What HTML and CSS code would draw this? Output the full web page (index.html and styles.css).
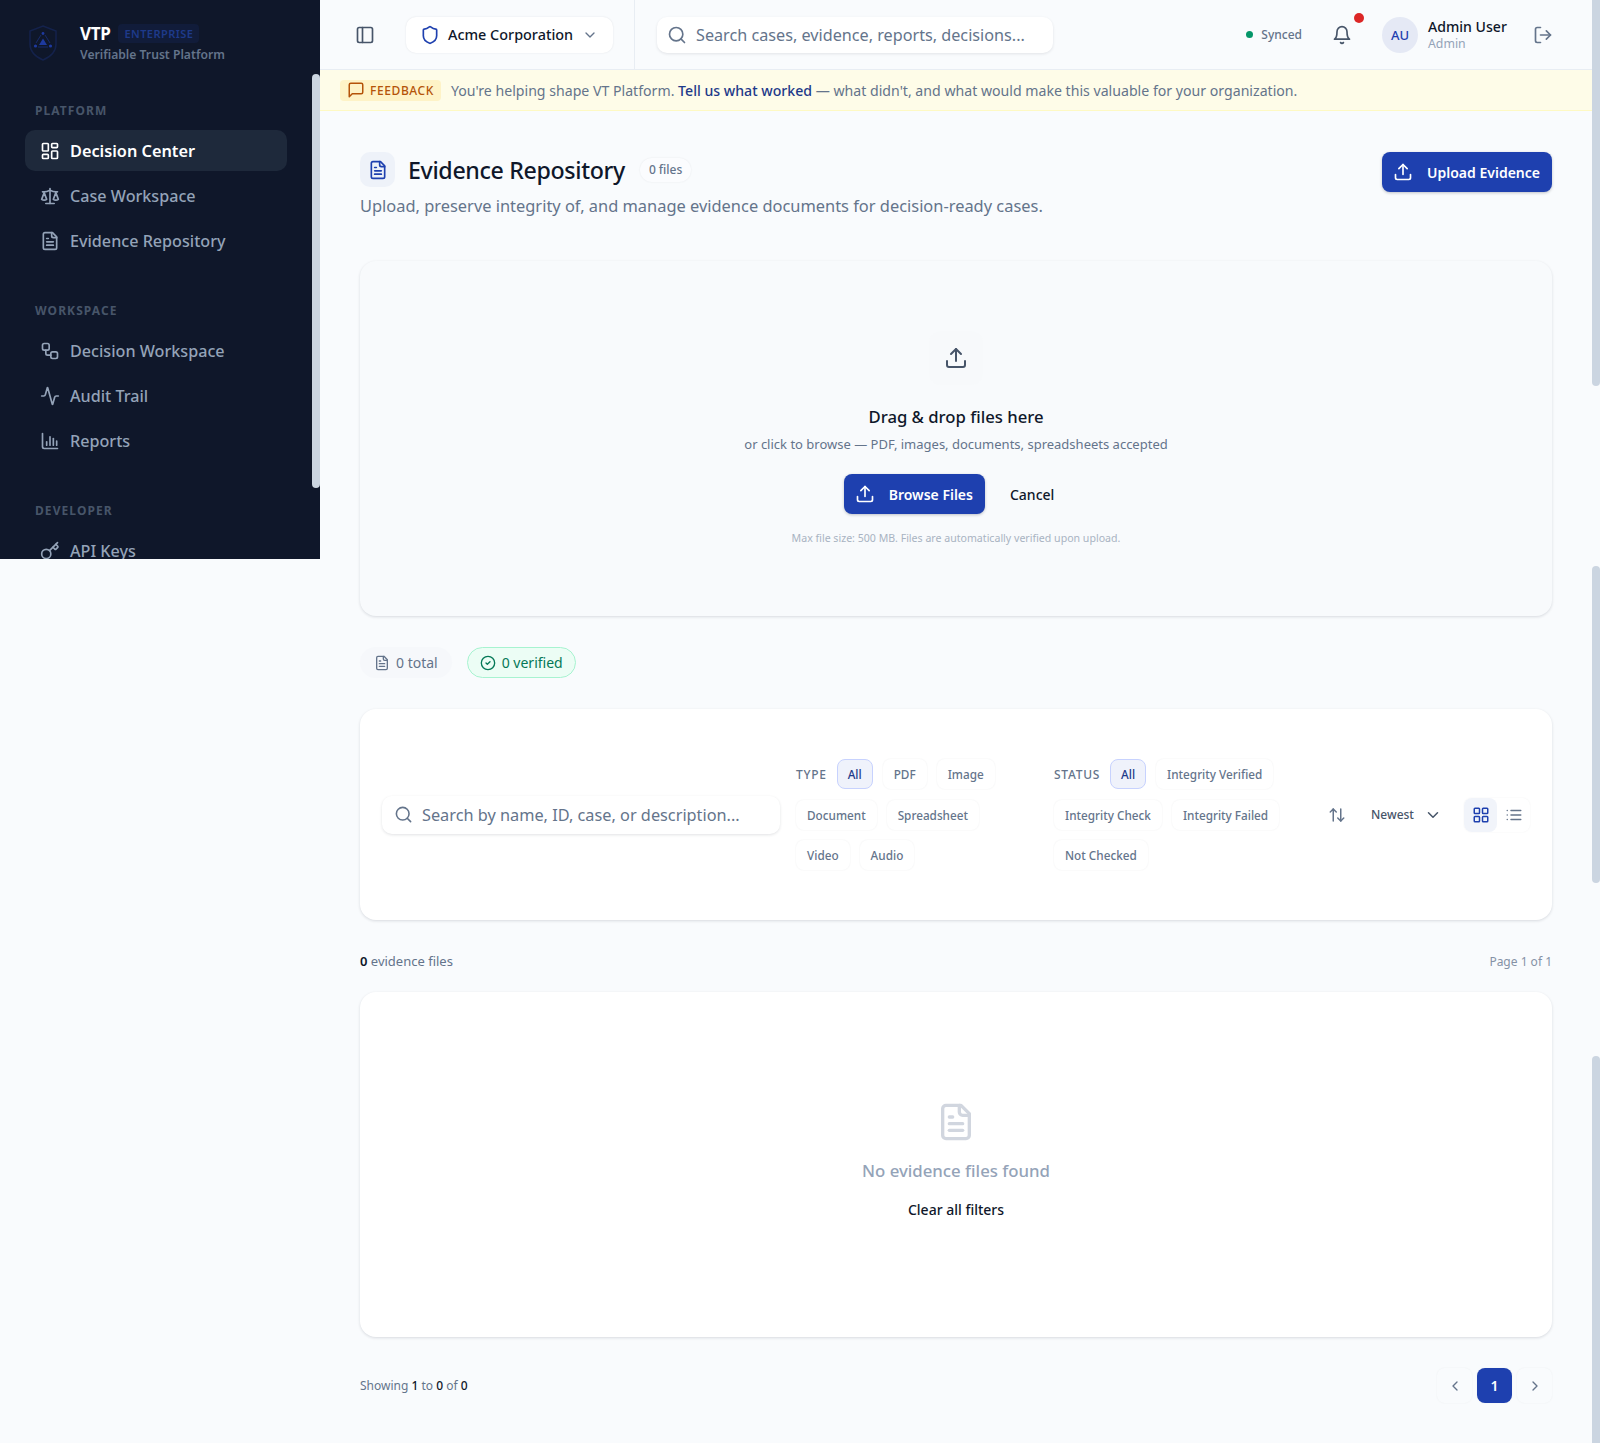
FILE: index.html
```html
<!DOCTYPE html>
<html lang="en">
<head>
  <meta charset="UTF-8">
  <meta name="viewport" content="width=device-width, initial-scale=1.0">
  <link rel="stylesheet" href="styles.css">
  <title>Evidence Repository</title>
</head>
<body>
  <svg class="sprite" aria-hidden="true">
    <symbol id="i-dashboard" viewBox="0 0 24 24"><rect x="3" y="3" width="7" height="9" rx="1"/><rect x="14" y="3" width="7" height="5" rx="1"/><rect x="14" y="12" width="7" height="9" rx="1"/><rect x="3" y="16" width="7" height="5" rx="1"/></symbol>
    <symbol id="i-scale" viewBox="0 0 24 24"><path d="m16 16 3-8 3 8c-.87.65-1.92 1-3 1s-2.13-.35-3-1Z"/><path d="m2 16 3-8 3 8c-.87.65-1.92 1-3 1s-2.13-.35-3-1Z"/><path d="M7 21h10"/><path d="M12 3v18"/><path d="M3 7h2c2 0 5-1 7-2 2 1 5 2 7 2h2"/></symbol>
    <symbol id="i-file" viewBox="0 0 24 24"><path d="M15 2H6a2 2 0 0 0-2 2v16a2 2 0 0 0 2 2h12a2 2 0 0 0 2-2V7Z"/><path d="M14 2v4a2 2 0 0 0 2 2h4"/><path d="M10 9H8"/><path d="M16 13H8"/><path d="M16 17H8"/></symbol>
    <symbol id="i-workflow" viewBox="0 0 24 24"><rect x="3" y="3" width="8" height="8" rx="2"/><path d="M7 11v4a2 2 0 0 0 2 2h4"/><rect x="13" y="13" width="8" height="8" rx="2"/></symbol>
    <symbol id="i-activity" viewBox="0 0 24 24"><path d="M22 12h-2.48a2 2 0 0 0-1.93 1.46l-2.35 8.36a.25.25 0 0 1-.48 0L9.24 2.18a.25.25 0 0 0-.48 0l-2.35 8.36A2 2 0 0 1 4.49 12H2"/></symbol>
    <symbol id="i-chart" viewBox="0 0 24 24"><path d="M3 3v16a2 2 0 0 0 2 2h16"/><path d="M8 17v-4"/><path d="M12 17V7"/><path d="M16 17V9"/><path d="M20 17v-5"/></symbol>
    <symbol id="i-key" viewBox="0 0 24 24"><path d="m15.5 7.5 2.3 2.3a1 1 0 0 0 1.4 0l2.1-2.1a1 1 0 0 0 0-1.4L19 4"/><path d="m21 2-9.6 9.6"/><circle cx="7.5" cy="15.5" r="5.5"/></symbol>
    <symbol id="i-panel" viewBox="0 0 24 24"><rect x="3" y="3" width="18" height="18" rx="2"/><path d="M9 3v18"/></symbol>
    <symbol id="i-shield" viewBox="0 0 24 24"><path d="M20 13c0 5-3.5 7.5-7.66 8.95a1 1 0 0 1-.67-.01C7.5 20.5 4 18 4 13V6a1 1 0 0 1 1-1c2 0 4.5-1.2 6.24-2.72a1.17 1.17 0 0 1 1.52 0C14.51 3.81 17 5 19 5a1 1 0 0 1 1 1z"/></symbol>
    <symbol id="i-down" viewBox="0 0 24 24"><path d="m6 9 6 6 6-6"/></symbol>
    <symbol id="i-search" viewBox="0 0 24 24"><circle cx="11" cy="11" r="8"/><path d="m21 21-4.3-4.3"/></symbol>
    <symbol id="i-bell" viewBox="0 0 24 24"><path d="M6 8a6 6 0 0 1 12 0c0 7 3 9 3 9H3s3-2 3-9"/><path d="M10.3 21a1.94 1.94 0 0 0 3.4 0"/></symbol>
    <symbol id="i-logout" viewBox="0 0 24 24"><path d="M9 21H5a2 2 0 0 1-2-2V5a2 2 0 0 1 2-2h4"/><path d="m16 17 5-5-5-5"/><path d="M21 12H9"/></symbol>
    <symbol id="i-upload" viewBox="0 0 24 24"><path d="M21 15v4a2 2 0 0 1-2 2H5a2 2 0 0 1-2-2v-4"/><path d="m17 8-5-5-5 5"/><path d="M12 3v12"/></symbol>
    <symbol id="i-message" viewBox="0 0 24 24"><path d="M21 15a2 2 0 0 1-2 2H7l-4 4V5a2 2 0 0 1 2-2h14a2 2 0 0 1 2 2z"/></symbol>
    <symbol id="i-check" viewBox="0 0 24 24"><circle cx="12" cy="12" r="10"/><path d="m9 12 2 2 4-4"/></symbol>
    <symbol id="i-sort" viewBox="0 0 24 24"><path d="m21 16-4 4-4-4"/><path d="M17 20V4"/><path d="m3 8 4-4 4 4"/><path d="M7 4v16"/></symbol>
    <symbol id="i-grid" viewBox="0 0 24 24"><rect x="3" y="3" width="7" height="7" rx="1"/><rect x="14" y="3" width="7" height="7" rx="1"/><rect x="14" y="14" width="7" height="7" rx="1"/><rect x="3" y="14" width="7" height="7" rx="1"/></symbol>
    <symbol id="i-list" viewBox="0 0 24 24"><path d="M8 6h13"/><path d="M8 12h13"/><path d="M8 18h13"/><path d="M3 6h.01"/><path d="M3 12h.01"/><path d="M3 18h.01"/></symbol>
    <symbol id="i-left" viewBox="0 0 24 24"><path d="m15 18-6-6 6-6"/></symbol>
    <symbol id="i-right" viewBox="0 0 24 24"><path d="m9 18 6-6-6-6"/></symbol>
  </svg>

  <div class="app">
    <aside class="sidebar">
      <div class="brand">
        <svg class="brand-logo" viewBox="0 0 30 36">
          <path class="logo-shield" d="M15 1 28 6v13c0 8-6 13-13 16C8 32 2 27 2 19V6z"/>
          <path class="logo-lines" d="M13 10l-5 8M17 10l5 8M10 22h10"/>
          <path class="logo-dot" d="M15 13.5l4 6.5h-8z"/>
          <circle class="logo-dot" cx="7.5" cy="21" r="1.6"/>
          <circle class="logo-dot" cx="22.5" cy="21" r="1.6"/>
          <circle class="logo-dot" cx="15" cy="8.5" r="1.4"/>
        </svg>
        <div class="brand-text">
          <div class="brand-top"><span class="brand-name">VTP</span><span class="brand-tag">ENTERPRISE</span></div>
          <div class="brand-sub">Verifiable Trust Platform</div>
        </div>
      </div>

      <div class="nav-label">PLATFORM</div>
      <nav class="nav">
        <a class="nav-item active"><svg class="icon"><use href="#i-dashboard"/></svg>Decision Center</a>
        <a class="nav-item"><svg class="icon"><use href="#i-scale"/></svg>Case Workspace</a>
        <a class="nav-item"><svg class="icon"><use href="#i-file"/></svg>Evidence Repository</a>
      </nav>

      <div class="nav-label">WORKSPACE</div>
      <nav class="nav">
        <a class="nav-item"><svg class="icon"><use href="#i-workflow"/></svg>Decision Workspace</a>
        <a class="nav-item"><svg class="icon"><use href="#i-activity"/></svg>Audit Trail</a>
        <a class="nav-item"><svg class="icon"><use href="#i-chart"/></svg>Reports</a>
      </nav>

      <div class="nav-label">DEVELOPER</div>
      <nav class="nav">
        <a class="nav-item"><svg class="icon"><use href="#i-key"/></svg>API Keys</a>
      </nav>

      <div class="sidebar-thumb"></div>
    </aside>

    <div class="main">
      <header class="topbar">
        <svg class="icon panel-toggle"><use href="#i-panel"/></svg>
        <div class="org-select">
          <svg class="icon org-icon"><use href="#i-shield"/></svg>
          <span class="org-name">Acme Corporation</span>
          <svg class="icon org-chevron"><use href="#i-down"/></svg>
        </div>
        <div class="top-divider"></div>
        <div class="top-search">
          <svg class="icon"><use href="#i-search"/></svg>
          <span>Search cases, evidence, reports, decisions...</span>
        </div>
        <div class="top-right">
          <span class="sync-dot"></span>
          <span class="sync-text">Synced</span>
          <div class="bell">
            <svg class="icon"><use href="#i-bell"/></svg>
            <span class="bell-dot"></span>
          </div>
          <div class="avatar">AU</div>
          <div class="user">
            <div class="user-name">Admin User</div>
            <div class="user-role">Admin</div>
          </div>
          <svg class="icon logout"><use href="#i-logout"/></svg>
        </div>
      </header>

      <div class="feedback">
        <span class="feedback-tag"><svg class="icon"><use href="#i-message"/></svg>FEEDBACK</span>
        <span>You're helping shape VT Platform. <a class="feedback-link">Tell us what worked</a> — what didn't, and what would make this valuable for your organization.</span>
      </div>

      <main class="content">
        <div class="page-head">
          <div>
            <div class="title-row">
              <span class="title-icon"><svg class="icon"><use href="#i-file"/></svg></span>
              <h1>Evidence Repository</h1>
              <span class="files-badge">0 files</span>
            </div>
            <p class="subtitle">Upload, preserve integrity of, and manage evidence documents for decision-ready cases.</p>
          </div>
          <button class="btn-primary"><svg class="icon"><use href="#i-upload"/></svg>Upload Evidence</button>
        </div>

        <section class="dropzone">
          <span class="drop-icon"><svg class="icon"><use href="#i-upload"/></svg></span>
          <div class="drop-title">Drag &amp; drop files here</div>
          <div class="drop-sub">or click to browse — PDF, images, documents, spreadsheets accepted</div>
          <div class="drop-actions">
            <button class="btn-primary browse"><svg class="icon"><use href="#i-upload"/></svg>Browse Files</button>
            <button class="btn-ghost">Cancel</button>
          </div>
          <div class="drop-note">Max file size: 500 MB. Files are automatically verified upon upload.</div>
        </section>

        <div class="stats">
          <span class="stat"><svg class="icon"><use href="#i-file"/></svg>0 total</span>
          <span class="stat stat-ok"><svg class="icon"><use href="#i-check"/></svg>0 verified</span>
        </div>

        <section class="filters">
          <div class="filter-search">
            <svg class="icon"><use href="#i-search"/></svg>
            <span>Search by name, ID, case, or description...</span>
          </div>
          <div class="filter-group">
            <span class="filter-label">TYPE</span>
            <span class="chip on">All</span>
            <span class="chip">PDF</span>
            <span class="chip">Image</span>
            <span class="chip">Document</span>
            <span class="chip">Spreadsheet</span>
            <span class="chip">Video</span>
            <span class="chip">Audio</span>
          </div>
          <div class="filter-group">
            <span class="filter-label">STATUS</span>
            <span class="chip on">All</span>
            <span class="chip">Integrity Verified</span>
            <span class="chip">Integrity Check</span>
            <span class="chip">Integrity Failed</span>
            <span class="chip">Not Checked</span>
          </div>
          <div class="filter-tools">
            <span class="sort-btn"><svg class="icon"><use href="#i-sort"/></svg></span>
            <span class="sort-select">Newest<svg class="icon"><use href="#i-down"/></svg></span>
            <div class="view-toggle">
              <span class="view-btn on"><svg class="icon"><use href="#i-grid"/></svg></span>
              <span class="view-btn"><svg class="icon"><use href="#i-list"/></svg></span>
            </div>
          </div>
        </section>

        <div class="count-row">
          <span><b>0</b> evidence files</span>
          <span class="page-of">Page 1 of 1</span>
        </div>

        <section class="empty">
          <svg class="icon"><use href="#i-file"/></svg>
          <div class="empty-title">No evidence files found</div>
          <a class="empty-link">Clear all filters</a>
        </section>

        <div class="pager-row">
          <span class="showing">Showing <b>1</b> to <b>0</b> of <b>0</b></span>
          <div class="pager">
            <span class="page-btn"><svg class="icon"><use href="#i-left"/></svg></span>
            <span class="page-btn on">1</span>
            <span class="page-btn"><svg class="icon"><use href="#i-right"/></svg></span>
          </div>
        </div>
      </main>
    </div>

    <div class="scroll-track">
      <div class="thumb thumb-a"></div>
      <div class="thumb thumb-b"></div>
      <div class="thumb thumb-c"></div>
    </div>
  </div>
</body>
</html>
```

FILE: styles.css
```css
* {
  box-sizing: border-box;
}

body {
  margin: 0;
  background-color: #f9fbfd;
  color: #0f172a;
  font-family: "Noto Sans", Arial, sans-serif;
}

h1, p {
  margin: 0;
}

button {
  font-family: inherit;
  border: 0;
  padding: 0;
  background: none;
  color: inherit;
}

.sprite {
  display: none;
}

.icon {
  width: 20px;
  height: 20px;
  flex: none;
  fill: none;
  stroke: currentColor;
  stroke-width: 2;
  stroke-linecap: round;
  stroke-linejoin: round;
}

.app {
  display: flex;
  align-items: flex-start;
  height: 1443px;
  overflow: hidden;
}

/* sidebar */
.sidebar {
  position: relative;
  flex: none;
  width: 320px;
  height: 559px;
  overflow: hidden;
  padding-left: 25px;
  background-color: #0f172a;
}

.brand {
  display: flex;
  align-items: center;
  height: 102px;
  padding: 0 0 16px 3px;
}

.brand-logo {
  width: 30px;
  height: 36px;
  margin-right: 22px;
}

.logo-shield {
  fill: none;
  stroke: #14224c;
  stroke-width: 1.5;
}

.logo-lines {
  fill: none;
  stroke: #172a6b;
  stroke-width: 1;
}

.logo-dot {
  fill: #1e3a9f;
}

.brand-top {
  display: flex;
  align-items: center;
  height: 24px;
}

.brand-name {
  color: #fff;
  font-size: 17px;
  font-weight: 700;
  letter-spacing: -0.02em;
}

.brand-tag {
  margin-left: 8px;
  padding: 2px 6px;
  border-radius: 4px;
  background-color: #111c3a;
  color: #1e3a8a;
  font-size: 11px;
  font-weight: 600;
  letter-spacing: 0.04em;
}

.brand-sub {
  color: #64748b;
  font-size: 12.15px;
  font-weight: 600;
  line-height: 20px;
}

.nav-label {
  height: 18px;
  padding-left: 10px;
  color: #475569;
  font-size: 12px;
  font-weight: 700;
  letter-spacing: 0.09em;
  line-height: 18px;
}

.nav {
  display: flex;
  flex-direction: column;
  gap: 4px;
  width: 262px;
  margin: 10px 0 41px;
}

.nav-item {
  display: flex;
  align-items: center;
  gap: 10px;
  flex: none;
  height: 41px;
  padding-left: 15px;
  border-radius: 10px;
  color: #94a3b8;
  font-size: 16.15px;
  font-weight: 500;
}

.nav-item.active {
  background-color: #1e293b;
  color: #fff;
  font-size: 16.3px;
  font-weight: 600;
}

.sidebar-thumb {
  position: absolute;
  top: 74px;
  right: 0;
  width: 8px;
  height: 414px;
  border-radius: 4px;
  background-color: #cbd5e1;
}

/* main column */
.main {
  flex: 1;
  min-width: 0;
}

.topbar {
  display: flex;
  align-items: center;
  height: 70px;
  padding-left: 35px;
  border-bottom: 1px solid #e8edf3;
}

.panel-toggle {
  color: #475569;
}

.org-select {
  display: flex;
  align-items: center;
  width: 207px;
  height: 36px;
  margin-left: 31px;
  padding-left: 14px;
  border-radius: 10px;
  background-color: #fff;
  box-shadow: 0 0 2px rgba(15, 23, 42, 0.1);
}

.org-icon {
  color: #1e40af;
}

.org-name {
  margin-left: 8px;
  font-size: 14.4px;
  font-weight: 500;
}

.org-chevron {
  width: 16px;
  height: 16px;
  margin-left: 9px;
  color: #64748b;
}

.top-divider {
  width: 1px;
  height: 69px;
  margin-left: 21px;
  background-color: #e8edf3;
}

.top-search {
  display: flex;
  align-items: center;
  gap: 9px;
  width: 396px;
  height: 36px;
  margin-left: 22px;
  padding-left: 10px;
  border-radius: 10px;
  background-color: #fff;
  box-shadow: 0 1px 3px rgba(15, 23, 42, 0.1);
  color: #64748b;
  font-size: 16.2px;
}

.top-right {
  display: flex;
  align-items: center;
  margin-left: auto;
}

.sync-dot {
  width: 7px;
  height: 7px;
  border-radius: 50%;
  background-color: #059669;
}

.sync-text {
  margin-left: 8px;
  color: #64748b;
  font-size: 12px;
  font-weight: 500;
}

.bell {
  position: relative;
  display: flex;
  margin-left: 30px;
  color: #475569;
}

.bell-dot {
  position: absolute;
  top: -12px;
  right: -12px;
  width: 10px;
  height: 10px;
  border-radius: 50%;
  background-color: #dc2626;
}

.avatar {
  display: flex;
  align-items: center;
  justify-content: center;
  width: 36px;
  height: 36px;
  margin-left: 30px;
  border-radius: 50%;
  background-color: #e5e9f5;
  color: #1e40af;
  font-size: 13px;
  font-weight: 500;
}

.user {
  margin-left: 10px;
  width: 105px;
}

.user-name {
  font-size: 14.1px;
  font-weight: 500;
  line-height: 18px;
}

.user-role {
  color: #94a3b8;
  font-size: 12.3px;
  line-height: 16px;
}

.logout {
  margin-right: 39px;
  color: #64748b;
}

.feedback {
  display: flex;
  align-items: center;
  gap: 10px;
  height: 41px;
  padding-left: 20px;
  border-bottom: 1px solid #fef9c3;
  background-color: #fefce8;
  color: #64748b;
  font-size: 14.13px;
}

.feedback-tag {
  display: flex;
  align-items: center;
  gap: 5px;
  height: 21px;
  padding: 0 7px;
  border-radius: 4px;
  background-color: #fef3c7;
  color: #b45309;
  font-size: 12px;
  font-weight: 500;
  letter-spacing: 0.05em;
}

.feedback-tag .icon {
  width: 18px;
  height: 18px;
}

.feedback-link {
  color: #1e3a8a;
  font-weight: 500;
}

.content {
  padding: 41px 40px 0;
}

.page-head {
  display: flex;
  justify-content: space-between;
  align-items: flex-start;
}

.title-row {
  display: flex;
  align-items: center;
  height: 35px;
}

.title-icon {
  display: flex;
  align-items: center;
  justify-content: center;
  width: 35px;
  height: 35px;
  margin-right: 13px;
  border-radius: 10px;
  background-color: #eef2f9;
  color: #1e40af;
}

h1 {
  font-size: 23.2px;
  font-weight: 500;
  letter-spacing: -0.015em;
}

.files-badge {
  display: flex;
  align-items: center;
  height: 24px;
  margin-left: 15px;
  padding: 0 9px;
  border-radius: 12px;
  background-color: #fbfcfe;
  box-shadow: 0 0 2px rgba(15, 23, 42, 0.08);
  color: #64748b;
  font-size: 12px;
  font-weight: 500;
}

.subtitle {
  margin-top: 7px;
  color: #64748b;
  font-size: 16.42px;
  line-height: 24px;
}

.btn-primary {
  display: flex;
  align-items: center;
  gap: 14px;
  height: 40px;
  padding: 0 12px 0 11px;
  border-radius: 8px;
  background-color: #1e40af;
  box-shadow: 0 1px 3px rgba(15, 23, 42, 0.25);
  color: #fff;
  font-size: 14px;
  font-weight: 600;
}

.dropzone {
  display: flex;
  flex-direction: column;
  align-items: center;
  height: 355px;
  margin-top: 43px;
  padding-top: 70px;
  border-radius: 16px;
  background-color: #f8fafc;
  box-shadow: 0 1px 3px rgba(15, 23, 42, 0.14);
}

.drop-icon {
  display: flex;
  align-items: center;
  justify-content: center;
  width: 54px;
  height: 54px;
  border-radius: 12px;
  background-color: #f7f9fb;
  color: #475569;
}

.drop-icon .icon {
  width: 24px;
  height: 24px;
}

.drop-title {
  margin-top: 19px;
  font-size: 16.7px;
  font-weight: 500;
  line-height: 26px;
}

.drop-sub {
  margin-top: 4px;
  color: #64748b;
  font-size: 13px;
  line-height: 20px;
}

.drop-actions {
  display: flex;
  align-items: center;
  gap: 25px;
  margin-top: 20px;
}

.btn-ghost {
  margin-right: 14px;
  font-size: 14px;
  font-weight: 500;
}

.drop-note {
  margin-top: 16px;
  color: #a8b3c2;
  font-size: 10.6px;
  line-height: 16px;
}

.stats {
  display: flex;
  gap: 15px;
  margin-top: 31px;
}

.stat {
  display: flex;
  align-items: center;
  gap: 6px;
  height: 31px;
  padding: 0 14px;
  border-radius: 16px;
  background-color: #f6f8fb;
  color: #64748b;
  font-size: 14px;
}

.stat .icon {
  width: 16px;
  height: 16px;
}

.stat-ok {
  padding: 0 12px;
  border: 1px solid #a7f3d0;
  background-color: #ecfdf5;
  color: #047857;
}

.filters {
  display: flex;
  align-items: center;
  height: 211px;
  margin-top: 31px;
  padding: 0 22px;
  border-radius: 16px;
  background-color: #fff;
  box-shadow: 0 1px 3px rgba(15, 23, 42, 0.14);
}

.filter-search {
  display: flex;
  align-items: center;
  gap: 9px;
  flex: none;
  width: 398px;
  height: 38px;
  padding-left: 12px;
  border-radius: 10px;
  background-color: #fff;
  box-shadow: 0 1px 3px rgba(15, 23, 42, 0.12);
  color: #64748b;
  font-size: 16.3px;
}

.filter-search .icon {
  width: 19px;
  height: 19px;
}

.filter-group {
  display: flex;
  flex-wrap: wrap;
  align-items: center;
  gap: 10.5px 10px;
  flex: none;
  width: 240px;
  margin-left: 16px;
}

.filter-group + .filter-group {
  margin-left: 18px;
}

.filter-label {
  color: #64748b;
  font-size: 12px;
  font-weight: 500;
  letter-spacing: 0.06em;
}

.chip {
  display: flex;
  align-items: center;
  height: 30px;
  padding: 0 11px;
  border-radius: 8px;
  background-color: #fff;
  box-shadow: 0 0 2px rgba(15, 23, 42, 0.07);
  color: #64748b;
  font-size: 11.75px;
  font-weight: 500;
}

.chip.on {
  padding: 0 10px;
  border: 1px solid #c7d2fe;
  background-color: #eff2fb;
  box-shadow: none;
  color: #1e3a8a;
}

.filter-tools {
  display: flex;
  align-items: center;
  margin-left: auto;
}

.sort-btn {
  display: flex;
  align-items: center;
  justify-content: center;
  width: 34px;
  height: 30px;
  margin-right: 3px;
  color: #64748b;
}

.sort-btn .icon {
  width: 18px;
  height: 18px;
}

.sort-select {
  display: flex;
  align-items: center;
  justify-content: space-between;
  width: 88px;
  height: 30px;
  padding: 0 3px 0 14px;
  border-radius: 8px;
  color: #475569;
  font-size: 12px;
  font-weight: 500;
}

.sort-select .icon {
  width: 18px;
  height: 18px;
}

.view-toggle {
  display: flex;
  margin-left: 19px;
  border-radius: 8px;
  box-shadow: 0 0 2px rgba(15, 23, 42, 0.06);
}

.view-btn {
  display: flex;
  align-items: center;
  justify-content: center;
  width: 33px;
  height: 34px;
  border-radius: 8px;
  color: #64748b;
}

.view-btn.on {
  background-color: #f1f4fa;
  color: #1e40af;
}

.view-btn .icon {
  width: 18px;
  height: 18px;
}

.count-row {
  display: flex;
  justify-content: space-between;
  align-items: center;
  height: 20px;
  margin-top: 31px;
  color: #64748b;
  font-size: 13px;
}

.count-row b {
  color: #0f172a;
  font-weight: 600;
}

.page-of {
  font-size: 12px;
  color: #8592a6;
}

.empty {
  display: flex;
  flex-direction: column;
  align-items: center;
  height: 345px;
  margin-top: 21px;
  padding-top: 110px;
  border-radius: 16px;
  background-color: #fff;
  box-shadow: 0 1px 3px rgba(15, 23, 42, 0.14);
}

.empty .icon {
  width: 40px;
  height: 40px;
  color: #d1d6df;
}

.empty-title {
  margin-top: 17px;
  color: #94a3b8;
  font-size: 16.8px;
  font-weight: 500;
  line-height: 24px;
}

.empty-link {
  margin-top: 15px;
  font-size: 14px;
  font-weight: 500;
  line-height: 24px;
}

.pager-row {
  display: flex;
  justify-content: space-between;
  align-items: center;
  margin-top: 31px;
}

.showing {
  color: #64748b;
  font-size: 12px;
}

.showing b {
  color: #0f172a;
  font-weight: 500;
}

.pager {
  display: flex;
  gap: 5px;
}

.page-btn {
  display: flex;
  align-items: center;
  justify-content: center;
  width: 35px;
  height: 35px;
  border-radius: 8px;
  box-shadow: 0 0 2px rgba(15, 23, 42, 0.06);
  color: #64748b;
  font-size: 14px;
}

.page-btn .icon {
  width: 16px;
  height: 16px;
}

.page-btn.on {
  background-color: #1e40af;
  color: #fff;
  font-weight: 600;
}

.scroll-track {
  display: flex;
  flex-direction: column;
  flex: none;
  width: 8px;
  height: 1443px;
}

.thumb {
  background-color: #cbd5e1;
  border-radius: 0 0 4px 4px;
}

.thumb-a {
  height: 386px;
}

.thumb-b {
  height: 317px;
  margin-top: 180px;
  border-radius: 4px;
}

.thumb-c {
  height: 387px;
  margin-top: 173px;
  border-radius: 4px 4px 0 0;
}
```
